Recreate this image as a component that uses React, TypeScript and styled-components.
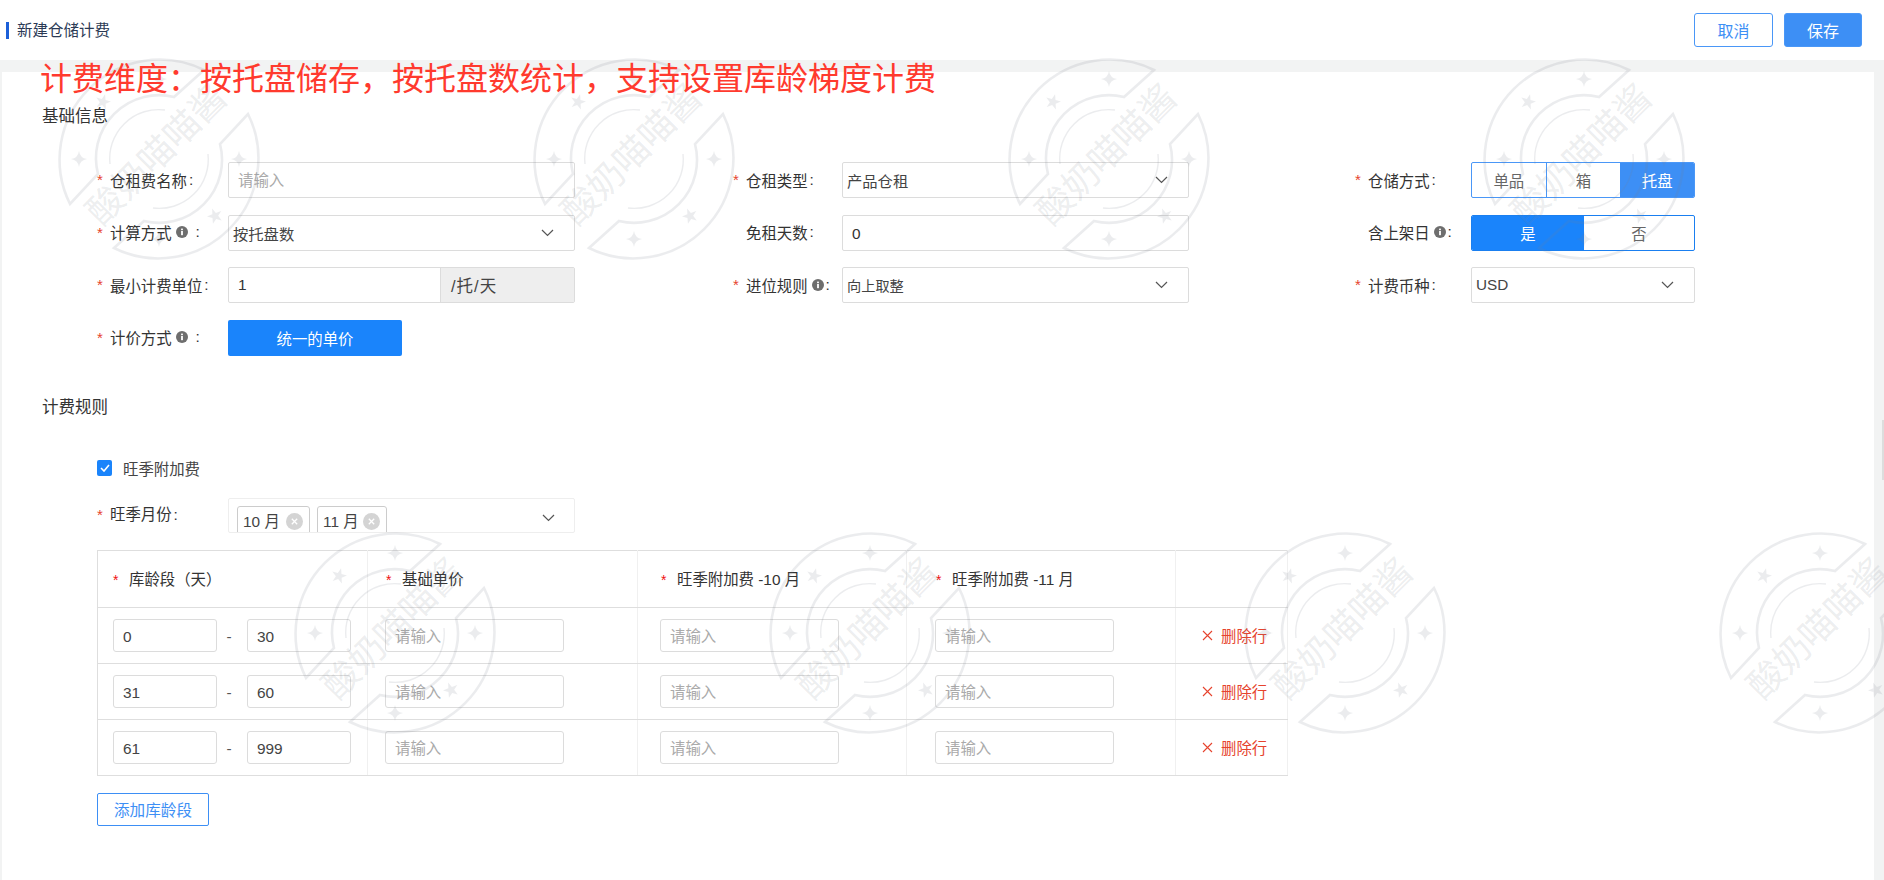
import React from "react";
import styled, { createGlobalStyle } from "styled-components";

const GlobalStyle = createGlobalStyle`
  html, body {
    margin: 0;
    padding: 0;
    background: #f2f3f3;
  }

  body {
    font-family: "Liberation Sans", "Noto Sans CJK SC", sans-serif;
    font-size: 15.4px;
    color: #333;
  }

  * {
    box-sizing: border-box;
  }
`;

const tiers = [
  { from: "0", to: "30" },
  { from: "31", to: "60" },
  { from: "61", to: "999" },
];

const watermarks = [
  [159, 159],
  [634, 159],
  [1109, 159],
  [1584, 159],
  [395, 633],
  [870, 633],
  [1345, 633],
  [1820, 633],
];

const Chevron = () => (
  <ChevronIcon width="13" height="8" viewBox="0 0 13 8">
    <path d="M1 1l5.5 5.5L12 1" fill="none" stroke="#555" strokeWidth="1.2" />
  </ChevronIcon>
);

const Info = () => (
  <InfoIcon width="12" height="12" viewBox="0 0 12 12">
    <circle cx="6" cy="6" r="6" fill="#6e6e6e" />
    <rect x="5.1" y="5" width="1.8" height="4.2" fill="#fff" />
    <rect x="5.1" y="2.6" width="1.8" height="1.6" fill="#fff" />
  </InfoIcon>
);

const TagClose = () => (
  <TagCloseIcon width="17" height="17" viewBox="0 0 17 17">
    <circle cx="8.5" cy="8.5" r="8.5" fill="#d4d4d4" />
    <path d="M5.8 5.8l5.4 5.4M11.2 5.8l-5.4 5.4" stroke="#fff" strokeWidth="1.3" />
  </TagCloseIcon>
);

const Watermark = () => (
  <WatermarkSvg width="1884" height="880" viewBox="0 0 1884 880">
    <defs>
      <g id="wm-half">
        <path
          d="M-89 45A100 100 0 0 1 45 -89L15 -62A63 63 0 0 0 -61 15Z"
          fill="none"
          stroke="currentColor"
          strokeWidth="2.6"
        />
        <path d="M-49 5A49 49 0 0 1 6 -49" fill="none" stroke="currentColor" strokeWidth="1.4" />
        <path
          transform="translate(0 -80)"
          d="M0 -8Q1 -1 8 0Q1 1 0 8Q-1 1 -8 0Q-1 -1 0 -8Z"
          fill="currentColor"
        />
        <path
          transform="translate(-80 0)"
          d="M0 -8Q1 -1 8 0Q1 1 0 8Q-1 1 -8 0Q-1 -1 0 -8Z"
          fill="currentColor"
        />
        <polygon
          transform="translate(-56 -57) rotate(15)"
          points="0,-8 1.9,-2.6 7.6,-2.5 3,1 4.7,6.5 0,3.2 -4.7,6.5 -3,1 -7.6,-2.5 -1.9,-2.6"
          fill="currentColor"
        />
      </g>
    </defs>
    {watermarks.map(([x, y]) => (
      <g key={`${x}-${y}`} transform={`translate(${x} ${y})`}>
        <use href="#wm-half" />
        <use href="#wm-half" transform="rotate(180)" />
        <WatermarkText transform="translate(-5 -7) rotate(-45)" textAnchor="middle" dominantBaseline="central">
          酸奶喵喵酱
        </WatermarkText>
      </g>
    ))}
  </WatermarkSvg>
);

type FieldProps = {
  label: string;
  labelWidth: number;
  required?: boolean;
  info?: boolean;
  colonGap?: number;
  children: React.ReactNode;
};

const Field = ({ label, labelWidth, required, info, colonGap = 2, children }: FieldProps) => (
  <FieldRow>
    <FieldLabel $width={labelWidth}>
      <Star>{required ? "*" : ""}</Star>
      {label}
      {info && <Info />}
      <Colon $gap={colonGap}>:</Colon>
    </FieldLabel>
    {children}
  </FieldRow>
);

const App = () => {
  return (
    <Page>
      <GlobalStyle />
      <Header>
        <PageTitle>新建仓储计费</PageTitle>
        <HeaderActions>
          <HeaderButton>取消</HeaderButton>
          <HeaderButton $primary>保存</HeaderButton>
        </HeaderActions>
      </Header>

      <Main>
        <SectionTitle>基础信息</SectionTitle>
        <FormGrid>
          <Field label="仓租费名称" labelWidth={131} required>
            <TextInput placeholder="请输入" />
          </Field>
          <Field label="仓租类型" labelWidth={109} required>
            <SelectBox>
              产品仓租
              <Chevron />
            </SelectBox>
          </Field>
          <Field label="仓储方式" labelWidth={116} required>
            <Segmented>
              <Segment>单品</Segment>
              <Segment $divided>箱</Segment>
              <Segment $active>托盘</Segment>
            </Segmented>
          </Field>

          <Field label="计算方式" labelWidth={131} required info colonGap={8}>
            <SelectBox>
              按托盘数
              <Chevron />
            </SelectBox>
          </Field>
          <Field label="免租天数" labelWidth={109}>
            <TextInput readOnly value="0" />
          </Field>
          <Field label="含上架日" labelWidth={116} info>
            <Segmented $strong>
              <Segment $active $strong>
                是
              </Segment>
              <Segment>否</Segment>
            </Segmented>
          </Field>

          <Field label="最小计费单位" labelWidth={131} required>
            <UnitGroup>
              <UnitInput readOnly value="1" />
              <UnitAddon>/托/天</UnitAddon>
            </UnitGroup>
          </Field>
          <Field label="进位规则" labelWidth={109} required info>
            <SelectBox $small>
              向上取整
              <Chevron />
            </SelectBox>
          </Field>
          <Field label="计费币种" labelWidth={116} required>
            <SelectBox>
              USD
              <Chevron />
            </SelectBox>
          </Field>

          <Field label="计价方式" labelWidth={131} required info colonGap={8}>
            <PriceModeButton>统一的单价</PriceModeButton>
          </Field>
        </FormGrid>

        <RulesTitle>计费规则</RulesTitle>
        <CheckRow>
          <CheckBox>
            <svg width="10" height="8" viewBox="0 0 10 8">
              <path d="M1 4l3 3 5-6" fill="none" stroke="#fff" strokeWidth="1.6" />
            </svg>
          </CheckBox>
          旺季附加费
        </CheckRow>

        <SeasonRow>
          <FieldLabel $width={131}>
            <SeasonStar>*</SeasonStar>
            旺季月份
            <Colon $gap={2}>:</Colon>
          </FieldLabel>
          <SeasonSelect>
            <MonthTag $width={73}>
              10 月
              <TagClose />
            </MonthTag>
            <MonthTag $width={70}>
              11 月
              <TagClose />
            </MonthTag>
            <Chevron />
          </SeasonSelect>
        </SeasonRow>

        <TierTable>
          <colgroup>
            <col width="270" />
            <col width="270" />
            <col width="269" />
            <col width="269" />
            <col width="112" />
          </colgroup>
          <thead>
            <tr>
              <HeadCell $inset={15}>
                <HeadStar>*</HeadStar>库龄段（天）
              </HeadCell>
              <HeadCell $inset={18}>
                <HeadStar>*</HeadStar>基础单价
              </HeadCell>
              <HeadCell $inset={23}>
                <HeadStar>*</HeadStar>旺季附加费 -10 月
              </HeadCell>
              <HeadCell $inset={29}>
                <HeadStar>*</HeadStar>旺季附加费 -11 月
              </HeadCell>
              <HeadCell $inset={0} />
            </tr>
          </thead>
          <tbody>
            {tiers.map((tier) => (
              <tr key={tier.from}>
                <BodyCell $inset={15}>
                  <RangeRow>
                    <CellInput $width={104} readOnly value={tier.from} />
                    <RangeDash>-</RangeDash>
                    <CellInput $width={104} readOnly value={tier.to} />
                  </RangeRow>
                </BodyCell>
                <BodyCell $inset={17}>
                  <CellInput $width={179} placeholder="请输入" />
                </BodyCell>
                <BodyCell $inset={22}>
                  <CellInput $width={179} placeholder="请输入" />
                </BodyCell>
                <BodyCell $inset={28}>
                  <CellInput $width={179} placeholder="请输入" />
                </BodyCell>
                <BodyCell $inset={26}>
                  <DeleteAction>
                    <svg width="11" height="11" viewBox="0 0 11 11">
                      <path d="M1 1l9 9M10 1l-9 9" stroke="#e6432d" strokeWidth="1.1" />
                    </svg>
                    删除行
                  </DeleteAction>
                </BodyCell>
              </tr>
            ))}
          </tbody>
        </TierTable>

        <AddTierButton>添加库龄段</AddTierButton>
      </Main>

      <Watermark />
      <Banner>计费维度：按托盘储存，按托盘数统计，支持设置库龄梯度计费</Banner>
      <ScrollThumb />
    </Page>
  );
};

export default App;

const Page = styled.div`
  position: relative;
  width: 1884px;
  height: 880px;
  overflow: hidden;
  display: flex;
  flex-direction: column;
  background: #f2f3f3;
`;

const Header = styled.header`
  height: 60px;
  flex: none;
  display: flex;
  align-items: center;
  justify-content: space-between;
  padding: 0 22px 0 6px;
  background: #fff;
`;

const PageTitle = styled.h1`
  margin: 0;
  padding-left: 8px;
  border-left: 3px solid #1c5fd8;
  font-size: 15.5px;
  font-weight: 400;
  line-height: 17px;
  color: #2b3a55;
`;

const HeaderActions = styled.div`
  display: flex;
  gap: 11px;
`;

const HeaderButton = styled.button<{ $primary?: boolean }>`
  width: ${({ $primary }) => ($primary ? "78px" : "79px")};
  height: 34px;
  padding: 0;
  border: 1px solid #4a97f7;
  border-radius: 3px;
  font: inherit;
  font-size: 16px;
  color: ${({ $primary }) => ($primary ? "#fff" : "#3d8ff5")};
  background: ${({ $primary }) => ($primary ? "#3d8ff5" : "#fff")};
`;

const Main = styled.main`
  flex: 1;
  margin: 12px 10px 0 2px;
  padding: 32px 0 0 0;
  background: #fff;
`;

const SectionTitle = styled.h2`
  margin: 0 0 34px 40px;
  font-size: 16.5px;
  font-weight: 400;
  line-height: 24px;
  color: #333;
`;

const RulesTitle = styled(SectionTitle)`
  margin: 39px 0 0 40px;
`;

const FormGrid = styled.div`
  display: grid;
  grid-template-columns: 636px 622px 340px;
  grid-auto-rows: 36px;
  row-gap: 16.5px;
  padding-left: 95px;
`;

const FieldRow = styled.div`
  display: flex;
  align-items: center;
`;

const FieldLabel = styled.div<{ $width: number }>`
  width: ${({ $width }) => $width}px;
  flex: none;
  display: flex;
  align-items: center;
  margin-top: -1px;
  color: #333;
`;

const Star = styled.span`
  width: 13px;
  flex: none;
  color: #e6432d;
  font-size: 15px;
`;

const SeasonStar = styled(Star)`
  width: 13px;
`;

const Colon = styled.span<{ $gap: number }>`
  margin-left: ${({ $gap }) => $gap}px;
`;

const InfoIcon = styled.svg`
  margin-left: 4px;
  flex: none;
`;

const ChevronIcon = styled.svg`
  flex: none;
`;

const TextInput = styled.input`
  width: 347px;
  height: 36px;
  padding: 2px 9px 0;
  border: 1px solid #dcdcdc;
  border-radius: 2px;
  outline: none;
  background: transparent;
  font: inherit;
  color: #333;

  &::placeholder {
    color: #aaa;
  }
`;

const SelectBox = styled.div<{ $small?: boolean }>`
  flex: 1;
  max-width: 347px;
  height: 36px;
  display: flex;
  align-items: center;
  justify-content: space-between;
  padding: 0 20px 0 4px;
  border: 1px solid #dcdcdc;
  border-radius: 2px;
  font-size: ${({ $small }) => ($small ? "14.2px" : "15.3px")};
  color: #444;
`;

const Segmented = styled.div<{ $strong?: boolean }>`
  width: 224px;
  height: 36px;
  display: flex;
  border: 1px solid ${({ $strong }) => ($strong ? "#1a7ff0" : "#4a97f7")};
  border-radius: 2px;
  overflow: hidden;
`;

const Segment = styled.div<{ $active?: boolean; $strong?: boolean; $divided?: boolean }>`
  flex: ${({ $strong }) => ($strong ? "0 0 112px" : "1")};
  display: flex;
  align-items: center;
  justify-content: center;
  color: ${({ $active }) => ($active ? "#fff" : "#666")};
  background: ${({ $active, $strong }) => ($active ? ($strong ? "#1a84fb" : "#3d8ff5") : "transparent")};
  border-left: ${({ $divided }) => ($divided ? "1px solid #4a97f7" : "none")};
`;

const UnitGroup = styled.div`
  width: 347px;
  height: 36px;
  display: flex;
  border: 1px solid #dcdcdc;
  border-radius: 2px;
`;

const UnitInput = styled.input`
  width: 211px;
  padding: 0 9px;
  border: none;
  outline: none;
  background: transparent;
  font: inherit;
  color: #333;
`;

const UnitAddon = styled.div`
  flex: 1;
  display: flex;
  align-items: center;
  padding-left: 10px;
  border-left: 1px solid #dcdcdc;
  background: #eee;
  font-size: 16.5px;
  letter-spacing: 1px;
  color: #444;
`;

const PriceModeButton = styled.button`
  width: 174px;
  height: 36px;
  padding: 0;
  border: none;
  border-radius: 2px;
  background: #1a84fb;
  font: inherit;
  color: #fff;
`;

const CheckRow = styled.div`
  height: 24px;
  margin: 37px 0 0 95px;
  display: flex;
  align-items: center;
  gap: 11px;
  color: #444;
`;

const CheckBox = styled.span`
  width: 15px;
  height: 16px;
  display: flex;
  align-items: center;
  justify-content: center;
  border-radius: 2px;
  background: #1a84fb;
`;

const SeasonRow = styled.div`
  margin: 18px 0 0 95px;
  display: flex;
  align-items: center;
  line-height: 30px;
`;

const SeasonSelect = styled.div`
  width: 347px;
  height: 35px;
  display: flex;
  gap: 7px;
  padding: 7px 0 0 8px;
  border: 1px solid #eee;
  border-radius: 2px;
  overflow: hidden;

  & > ${ChevronIcon} {
    margin: 8px 19px 0 auto;
  }
`;

const MonthTag = styled.div<{ $width: number }>`
  width: ${({ $width }) => $width}px;
  height: 36px;
  flex: none;
  display: flex;
  justify-content: space-between;
  padding: 0 6px 0 5px;
  border: 1px solid #ccc;
  border-radius: 3px;
  color: #444;
`;

const TagCloseIcon = styled.svg`
  margin-top: 6px;
  flex: none;
`;

const TierTable = styled.table`
  width: 1190px;
  margin: 17px 0 0 95px;
  border: 1px solid #dedede;
  border-collapse: collapse;
  table-layout: fixed;
`;

const HeadCell = styled.th<{ $inset: number }>`
  height: 57px;
  padding: 0 0 2px ${({ $inset }) => $inset}px;
  border-bottom: 1px solid #dedede;
  border-right: 1px solid #f0f0f0;
  font-weight: 400;
  text-align: left;
  color: #333;
`;

const HeadStar = styled.span`
  display: inline-block;
  width: 16px;
  color: #f01010;
  font-size: 14px;
`;

const BodyCell = styled.td<{ $inset: number }>`
  height: 56px;
  padding: 0 0 0 ${({ $inset }) => $inset}px;
  border-bottom: 1px solid #dedede;
  border-right: 1px solid #f0f0f0;
`;

const RangeRow = styled.div`
  display: flex;
  align-items: center;
`;

const RangeDash = styled.span`
  width: 30px;
  padding: 4px 6px 0 0;
  text-align: center;
  color: #555;
`;

const CellInput = styled.input<{ $width: number }>`
  display: block;
  width: ${({ $width }) => $width}px;
  height: 33px;
  padding: 3px 9px 0;
  border: 1px solid #dcdcdc;
  border-radius: 3px;
  outline: none;
  background: transparent;
  font: inherit;
  color: #444;

  &::placeholder {
    color: #aaa;
  }
`;

const DeleteAction = styled.div`
  display: flex;
  align-items: center;
  gap: 8px;
  color: #e6432d;
  white-space: nowrap;
`;

const AddTierButton = styled.button`
  display: block;
  width: 112px;
  height: 33px;
  margin: 17px 0 0 95px;
  padding: 0;
  border: 1px solid #3d8ff5;
  border-radius: 2px;
  background: #fff;
  font: inherit;
  font-size: 15.6px;
  color: #3d8ff5;
`;

const WatermarkSvg = styled.svg`
  position: absolute;
  inset: 0;
  color: rgba(120, 130, 140, 0.15);
  pointer-events: none;
`;

const WatermarkText = styled.text`
  font-family: "Noto Sans CJK SC", sans-serif;
  font-size: 36px;
  fill: currentColor;
`;

const Banner = styled.div`
  position: absolute;
  left: 40px;
  top: 56px;
  font-size: 32px;
  line-height: 46px;
  color: #ff3a2e;
  white-space: nowrap;
  pointer-events: none;
`;

const ScrollThumb = styled.div`
  position: absolute;
  right: 0;
  top: 420px;
  width: 2px;
  height: 60px;
  background: #ddd;
`;
